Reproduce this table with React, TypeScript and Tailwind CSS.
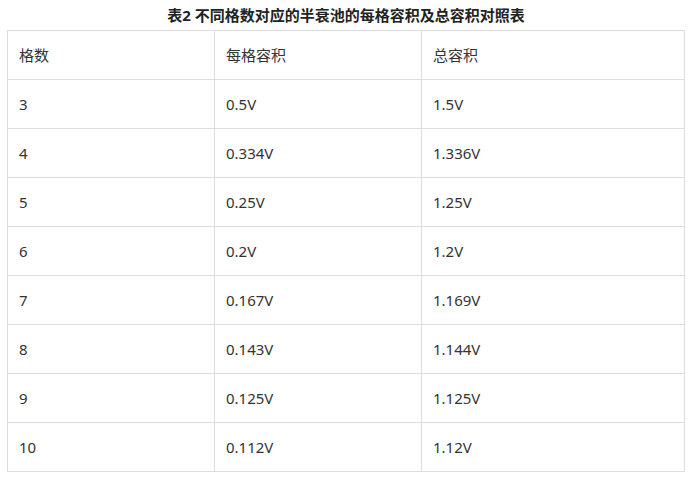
const rows = [
  ["3", "0.5V", "1.5V"],
  ["4", "0.334V", "1.336V"],
  ["5", "0.25V", "1.25V"],
  ["6", "0.2V", "1.2V"],
  ["7", "0.167V", "1.169V"],
  ["8", "0.143V", "1.144V"],
  ["9", "0.125V", "1.125V"],
  ["10", "0.112V", "1.12V"],
]

const font = "font-['Noto_Sans','Noto_Sans_CJK_SC',sans-serif]"

export default function App() {
  return (
    <div className={`w-[692px] h-[477px] bg-white text-[#333] ${font}`}>
      <div className="h-[30px] flex items-center justify-center text-[15px] font-bold text-[#222]">
        表2 不同格数对应的半衰池的每格容积及总容积对照表
      </div>
      <table className="ml-[7px] w-[678px] border-collapse table-fixed text-[15px]">
        <colgroup>
          <col className="w-[207px]" />
          <col className="w-[207px]" />
          <col />
        </colgroup>
        <tbody>
          <tr className="h-[49px]">
            <td className="border border-[#ddd] px-[11px]">格数</td>
            <td className="border border-[#ddd] px-[11px]">每格容积</td>
            <td className="border border-[#ddd] px-[11px]">总容积</td>
          </tr>
          {rows.map((r) => (
            <tr key={r[0]} className="h-[49px]">
              {r.map((c, i) => (
                <td key={i} className="border border-[#ddd] px-[11px]">
                  {c}
                </td>
              ))}
            </tr>
          ))}
        </tbody>
      </table>
    </div>
  )
}
